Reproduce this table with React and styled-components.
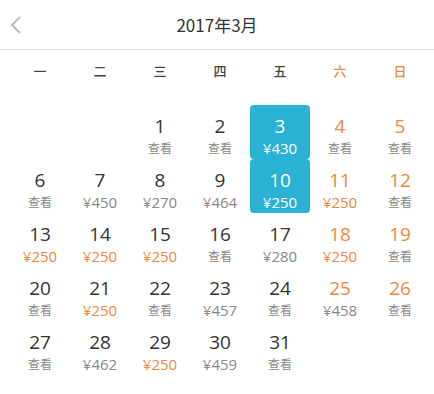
import React from "react";
import styled, { createGlobalStyle } from "styled-components";

const GlobalStyle = createGlobalStyle`
  body {
    margin: 0;
    background: #fff;
    font-family: "Noto Sans CJK SC", "Noto Sans", sans-serif;
  }
`;

const weekdays = ["一", "二", "三", "四", "五", "六", "日"];

// March 2017 starts on a Wednesday
const prices = {
  3: "¥430", 7: "¥450", 8: "¥270", 9: "¥464", 10: "¥250", 11: "¥250",
  13: "¥250", 14: "¥250", 15: "¥250", 17: "¥280", 18: "¥250",
  21: "¥250", 23: "¥457", 25: "¥458", 28: "¥462", 29: "¥250", 30: "¥459",
};
const selected = [3, 10];
const offset = 2;

function App() {
  const cells = [];
  for (let i = 0; i < offset; i++) cells.push(null);
  for (let d = 1; d <= 31; d++) cells.push(d);

  return (
    <Page>
      <GlobalStyle />
      <Header>
        <Back>
          <svg width="14" height="20" viewBox="0 0 14 20">
            <path d="M11 2 L3 10 L11 18" fill="none" stroke="#bbb" strokeWidth="2" />
          </svg>
        </Back>
        <Title>2017年3月</Title>
      </Header>
      <Weekdays>
        {weekdays.map((w, i) => (
          <Weekday key={w} weekend={i >= 5}>
            {w}
          </Weekday>
        ))}
      </Weekdays>
      <Grid>
        {cells.map((d, i) => {
          if (!d) return <Cell key={"e" + i} />;
          const weekend = i % 7 >= 5;
          const price = prices[d];
          const active = selected.includes(d);
          return (
            <Cell key={d} active={active}>
              <Day weekend={weekend} active={active}>{d}</Day>
              {price ? (
                <Price cheap={price === "¥250"} active={active}>{price}</Price>
              ) : (
                <Look>查看</Look>
              )}
            </Cell>
          );
        })}
      </Grid>
    </Page>
  );
}

export default App;

const orange = "#f0883a";

const Page = styled.div`
  width: 434px;
  height: 394px;
  background: #fff;
`;

const Header = styled.div`
  height: 49px;
  border-bottom: 1px solid #e0e0e0;
  display: flex;
  align-items: center;
  justify-content: center;
  position: relative;
`;

const Back = styled.div`
  position: absolute;
  left: 9px;
  top: 15px;
  display: flex;
`;

const Title = styled.div`
  font-size: 17px;
  color: #333;
`;

const Weekdays = styled.div`
  display: grid;
  grid-template-columns: repeat(7, 60px);
  padding-left: 10px;
  height: 40px;
  align-items: center;
`;

const Weekday = styled.div`
  text-align: center;
  font-size: 13px;
  font-weight: 500;
  color: ${(p) => (p.weekend ? orange : "#444")};
`;

const Grid = styled.div`
  display: grid;
  grid-template-columns: repeat(7, 60px);
  grid-auto-rows: 54px;
  padding-left: 10px;
  margin-top: 15px;
`;

const Cell = styled.div`
  display: flex;
  flex-direction: column;
  align-items: center;
  padding-top: 9px;
  box-sizing: border-box;
  border-radius: 4px;
  background: ${(p) => (p.active ? "#2ab2d5" : "transparent")};
`;

const Day = styled.div`
  font-family: "Open Sans", "Noto Sans", sans-serif;
  font-size: 19px;
  line-height: 24px;
  color: ${(p) => (p.active ? "#fff" : p.weekend ? orange : "#333")};
`;

const Price = styled.div`
  font-family: "Open Sans", "Noto Sans", sans-serif;
  font-size: 15px;
  line-height: 18px;
  margin-top: 1px;
  color: ${(p) => (p.active ? "#fff" : p.cheap ? orange : "#888")};
`;

const Look = styled.div`
  font-size: 12px;
  line-height: 18px;
  margin-top: 1px;
  color: #888;
`;
